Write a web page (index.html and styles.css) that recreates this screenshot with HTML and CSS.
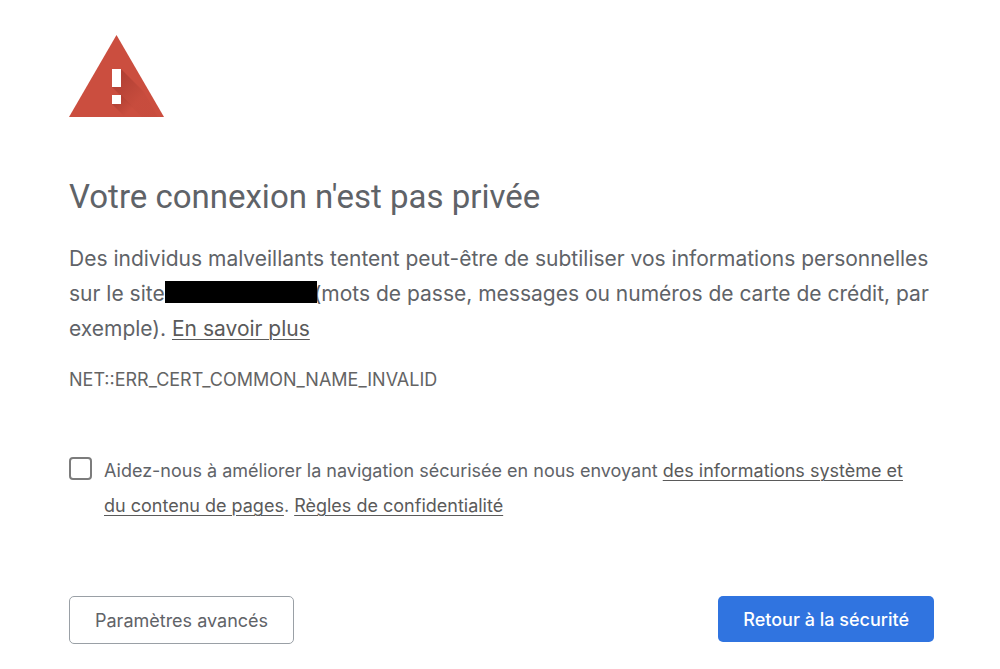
FILE: index.html
```
<!DOCTYPE html>
<html lang="fr">
<head>
  <meta charset="UTF-8">
  <meta name="viewport" content="width=device-width, initial-scale=1.0">
  <title>Erreur liée à la confidentialité</title>
  <link rel="stylesheet" href="styles.css">
</head>
<body>
  <main class="interstitial">
    <svg class="icon" viewBox="0 0 95 82" aria-hidden="true">
      <defs>
        <linearGradient id="shade" gradientUnits="userSpaceOnUse" x1="47" y1="42" x2="70" y2="65">
          <stop offset="0" stop-color="#a93c30" stop-opacity="0.8"/>
          <stop offset="1" stop-color="#a93c30" stop-opacity="0.1"/>
        </linearGradient>
        <linearGradient id="shadeDot" gradientUnits="userSpaceOnUse" x1="47" y1="64" x2="60" y2="77">
          <stop offset="0" stop-color="#a93c30" stop-opacity="0.8"/>
          <stop offset="1" stop-color="#a93c30" stop-opacity="0"/>
        </linearGradient>
      </defs>
      <path class="icon-triangle" d="M47.500 0 95 82H0z"/>
      <path fill="url(#shade)" d="M52 34 75 57 89 82H73L43 52z"/>
      <path fill="url(#shadeDot)" d="M52 60 74 82H56L43 69z"/>
      <path class="icon-mark" d="M43 34h9v18h-9zM43 60h9v9h-9z"/>
    </svg>

    <h1>Votre connexion n'est pas privée</h1>
    <p class="message">
      Des individus malveillants tentent peut-être de subtiliser vos informations personnelles
      sur le site<span class="redacted"></span>(mots de passe, messages ou numéros de carte de crédit, par
      exemple). <a href="#">En savoir plus</a>
    </p>
    <div class="error-code">NET::ERR_CERT_COMMON_NAME_INVALID</div>

    <div class="opt-in">
      <input type="checkbox" id="optIn">
      <label for="optIn">
        Aidez-nous à améliorer la navigation sécurisée en nous envoyant
        <a href="#">des informations système et du contenu de pages</a>.
        <a href="#">Règles de confidentialité</a>
      </label>
    </div>

    <div class="buttons">
      <button type="button" class="secondary">Paramètres avancés</button>
      <button type="button" class="primary">Retour à la sécurité</button>
    </div>
  </main>
</body>
</html>
```
FILE: styles.css
```
* { box-sizing: border-box; }
body {
  margin: 0;
  font-family: Inter, sans-serif;
  background: #fff;
  color: #5f6368;
}
.interstitial {
  padding: 35px 66px 24px 69px;
}
.icon {
  display: block;
  width: 95px;
  height: 82px;
}
.icon-triangle { fill: #cb4e3f; }
.icon-mark { fill: #fff; }
h1 {
  margin: 56px 0 20px;
  font-family: Roboto, sans-serif;
  font-size: 33px;
  font-weight: 400;
  line-height: 48px;
}
.message {
  margin: 0;
  font-size: 21px;
  line-height: 35px;
}
.redacted {
  position: relative;
  display: inline-block;
  width: 152px;
  height: 22px;
  margin-right: -3px;
  background: #000;
  vertical-align: -2px;
}
a {
  color: #5a5a5a;
  text-decoration-thickness: 1px;
  text-underline-offset: 3px;
}
.error-code {
  margin-top: 22px;
  color: #646464;
  font-size: 18px;
  line-height: 24px;
}
.opt-in {
  display: flex;
  gap: 12px;
  margin-top: 61px;
  padding-right: 8px;
  font-size: 18px;
  line-height: 35px;
}
.opt-in input {
  appearance: none;
  flex: none;
  width: 23px;
  height: 23px;
  margin: 4px 0 0;
  border: 2px solid #7c7c7c;
  border-radius: 4px;
}
.buttons {
  display: flex;
  justify-content: space-between;
  align-items: flex-start;
  margin-top: 73px;
}
button {
  height: 48px;
  padding: 0 25px;
  border-radius: 5px;
  font: 18px Inter, sans-serif;
  cursor: pointer;
}
.secondary {
  border: 1px solid #9aa0a6;
  background: #fff;
  color: #5f6368;
}
.primary {
  height: 46px;
  border: none;
  background: #3074e0;
  color: #fff;
  font-weight: 500;
}
```
